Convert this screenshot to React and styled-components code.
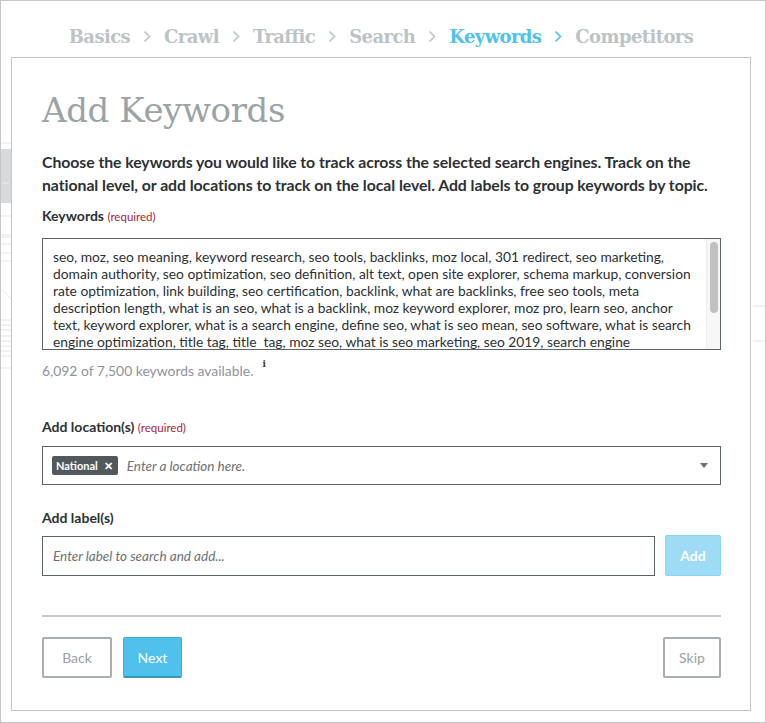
import React from "react";
import styled, { createGlobalStyle } from "styled-components";

const GlobalStyle = createGlobalStyle`
  body {
    margin: 0;
    background: #fff;
    font-family: Lato, "Open Sans", sans-serif;
  }
`;

const Frame = styled.div`
  position: relative;
  width: 766px;
  height: 723px;
  box-sizing: border-box;
  border: 1px solid #c3c7c9;
  background: #fff;
  overflow: hidden;
`;

const Backdrop = styled.svg`
  position: absolute;
  inset: 0;
  pointer-events: none;
`;

const Steps = styled.nav`
  position: relative;
  display: flex;
  align-items: center;
  justify-content: center;
  gap: 13px;
  height: 56px;
  box-sizing: border-box;
  padding: 14px 4px 0 0;
`;

const Step = styled.span`
  font-family: "DejaVu Serif", serif;
  font-weight: 700;
  font-size: 18px;
  letter-spacing: -0.6px;
  color: ${({ $active }) => ($active ? "#4fc1ec" : "#bcc3c6")};
`;

const Card = styled.section`
  position: relative;
  margin: 0 14px 0 10px;
  height: 654px;
  box-sizing: border-box;
  border: 1px solid #c3c7c9;
  background: #fff;
  padding: 0 29px 0 30px;
  display: flex;
  flex-direction: column;
`;

const Title = styled.h1`
  margin: 32px 0 0;
  font-family: "DejaVu Serif", serif;
  font-weight: 400;
  font-size: 34px;
  line-height: 40px;
  letter-spacing: -0.4px;
  color: #9ba3a6;
`;

const Intro = styled.p`
  margin: 20px 0 0;
  font-size: 15.8px;
  font-weight: 700;
  line-height: 23px;
  letter-spacing: -0.05px;
  color: #2c3134;
`;

const Label = styled.div`
  margin-top: ${({ $top }) => $top}px;
  font-size: 14px;
  font-weight: 700;
  line-height: 20px;
  color: #2c3134;
`;

const Required = styled.span`
  font-size: 11.5px;
  font-weight: 400;
  color: #a3263d;
`;

const TextBox = styled.div`
  margin-top: 11px;
  height: 112px;
  box-sizing: border-box;
  border: 1px solid #5d6468;
  display: flex;
`;

const TextContent = styled.div`
  flex: 1;
  overflow: hidden;
  padding: 9px 8px 0 10px;
  font-size: 13.8px;
  line-height: 17px;
  color: #2c3134;
`;

const TextLine = styled.div`
  white-space: pre;
`;

const ScrollTrack = styled.div`
  width: 14px;
  background: #f7f7f7;
  border-left: 1px solid #ececec;
  padding: 3px 2px;
  box-sizing: border-box;
`;

const ScrollThumb = styled.div`
  height: 71px;
  width: 8px;
  margin: 0 auto;
  border-radius: 4px;
  background: #c1c1c1;
`;

const Count = styled.div`
  margin-top: 12px;
  display: flex;
  align-items: flex-start;
  font-size: 13.9px;
  line-height: 18px;
  color: #8d9497;
`;

const Info = styled.span`
  position: relative;
  top: -3px;
  margin-left: 9px;
  font-family: "DejaVu Serif", serif;
  font-weight: 700;
  font-size: 9px;
  line-height: 10px;
  color: #3a3f42;
`;

const Select = styled.div`
  margin-top: 8px;
  height: 39px;
  box-sizing: border-box;
  border: 1px solid #5d6468;
  display: flex;
  align-items: center;
  padding: 0 12px 0 9px;
  gap: 9px;
`;

const Tag = styled.span`
  display: inline-flex;
  align-items: center;
  gap: 6px;
  height: 19px;
  padding: 0 5px 0 4px;
  border-radius: 2px;
  background: #52595d;
  color: #fff;
  font-size: 11px;
  font-weight: 700;
`;

const Placeholder = styled.span`
  flex: 1;
  font-size: 13.5px;
  font-style: italic;
  color: #6b7275;
`;

const Caret = styled.span`
  width: 0;
  height: 0;
  border-left: 4px solid transparent;
  border-right: 4px solid transparent;
  border-top: 5px solid #6b7275;
`;

const Row = styled.div`
  margin-top: 8px;
  display: flex;
  gap: 10px;
`;

const Input = styled.div`
  flex: 1;
  height: 40px;
  box-sizing: border-box;
  border: 1px solid #5d6468;
  display: flex;
  align-items: center;
  padding: 0 10px;
  font-size: 13.5px;
  font-style: italic;
  color: #6b7275;
`;

const AddButton = styled.button`
  width: 56px;
  height: 41px;
  margin-top: -1px;
  border: 1px solid #8fd2ec;
  border-radius: 2px;
  background: #9ddcf4;
  color: #fff;
  font-family: Lato, sans-serif;
  font-size: 14px;
  font-weight: 700;
`;

const Divider = styled.hr`
  margin: 39px 0 0;
  border: 0;
  height: 2px;
  background: #c1c7ca;
`;

const Actions = styled.div`
  margin-top: 20px;
  display: flex;
  gap: 11px;
`;

const NavButton = styled.button`
  height: 41px;
  width: ${({ $w }) => $w}px;
  box-sizing: border-box;
  border-radius: 2px;
  font-family: Lato, sans-serif;
  font-size: 14px;
  border: 2px solid #a8aeb1;
  background: #fff;
  color: #9aa1a4;
  ${({ $primary }) =>
    $primary &&
    `
    border: 1px solid #3fadd8;
    border-bottom: 2px solid #3598c0;
    background: #4fc1ec;
    color: #fff;
  `}
  ${({ $push }) => $push && `margin-left: auto;`}
`;

const Chevron = () => (
  <svg width="8" height="13" viewBox="0 0 8 13">
    <path d="M1.5 1.5 L6.5 6.5 L1.5 11.5" fill="none" stroke="currentColor" strokeWidth="1.6" />
  </svg>
);

const ChevronWrap = styled.span`
  display: inline-flex;
  color: ${({ $active }) => ($active ? "#4fc1ec" : "#bcc3c6")};
`;

const steps = ["Basics", "Crawl", "Traffic", "Search", "Keywords", "Competitors"];

const keywordLines = [
  "seo, moz, seo meaning, keyword research, seo tools, backlinks, moz local, 301 redirect, seo marketing,",
  "domain authority, seo optimization, seo definition, alt text, open site explorer, schema markup, conversion",
  "rate optimization, link building, seo certification, backlink, what are backlinks, free seo tools, meta",
  "description length, what is an seo, what is a backlink, moz keyword explorer, moz pro, learn seo, anchor",
  "text, keyword explorer, what is a search engine, define seo, what is seo mean, seo software, what is search",
  "engine optimization, title tag, title  tag, moz seo, what is seo marketing, seo 2019, search engine",
  "ranking, what is seo in marketing, seo keywords, local seo, seo strategy",
];

const leftLines = [142, 215, 234, 236, 243, 252, 260, 319, 324, 329, 335, 340, 345, 350, 355, 367];

export default function App() {
  return (
    <Frame>
      <GlobalStyle />
      <Backdrop width="766" height="723">
        {leftLines.map((y) => (
          <line key={y} x1="0" x2="10" y1={y} y2={y} stroke="#e2e4e5" strokeWidth="1" />
        ))}
        <rect x="0" y="148" width="10" height="54" fill="#d7d9da" />
        <line x1="1" x2="8" y1="182" y2="182" stroke="#eceeef" />
        <line x1="1" x2="10" y1="288" y2="298" stroke="#e6e8e9" />
        <line x1="752" x2="766" y1="305" y2="305" stroke="#e2e4e5" />
        <line x1="752" x2="766" y1="340" y2="340" stroke="#e2e4e5" />
      </Backdrop>
      <Steps>
        {steps.map((s, i) => (
          <React.Fragment key={s}>
            {i > 0 && (
              <ChevronWrap $active={steps[i - 1] === "Keywords"}>
                <Chevron />
              </ChevronWrap>
            )}
            <Step $active={s === "Keywords"}>{s}</Step>
          </React.Fragment>
        ))}
      </Steps>
      <Card>
        <Title>Add Keywords</Title>
        <Intro>
          Choose the keywords you would like to track across the selected search engines. Track on the
          national level, or add locations to track on the local level. Add labels to group keywords by topic.
        </Intro>
        <Label $top={10}>
          Keywords <Required>(required)</Required>
        </Label>
        <TextBox>
          <TextContent>
            {keywordLines.map((line, i) => (
              <TextLine key={i}>{line}</TextLine>
            ))}
          </TextContent>
          <ScrollTrack>
            <ScrollThumb />
          </ScrollTrack>
        </TextBox>
        <Count>
          <span>6,092 of 7,500 keywords available.</span>
          <Info>i</Info>
        </Count>
        <Label $top={37}>
          Add location(s) <Required>(required)</Required>
        </Label>
        <Select>
          <Tag>
            National <span>✕</span>
          </Tag>
          <Placeholder>Enter a location here.</Placeholder>
          <Caret />
        </Select>
        <Label $top={23}>Add label(s)</Label>
        <Row>
          <Input>Enter label to search and add...</Input>
          <AddButton>Add</AddButton>
        </Row>
        <Divider />
        <Actions>
          <NavButton $w={70}>Back</NavButton>
          <NavButton $w={59} $primary>
            Next
          </NavButton>
          <NavButton $w={58} $push>
            Skip
          </NavButton>
        </Actions>
      </Card>
    </Frame>
  );
}
